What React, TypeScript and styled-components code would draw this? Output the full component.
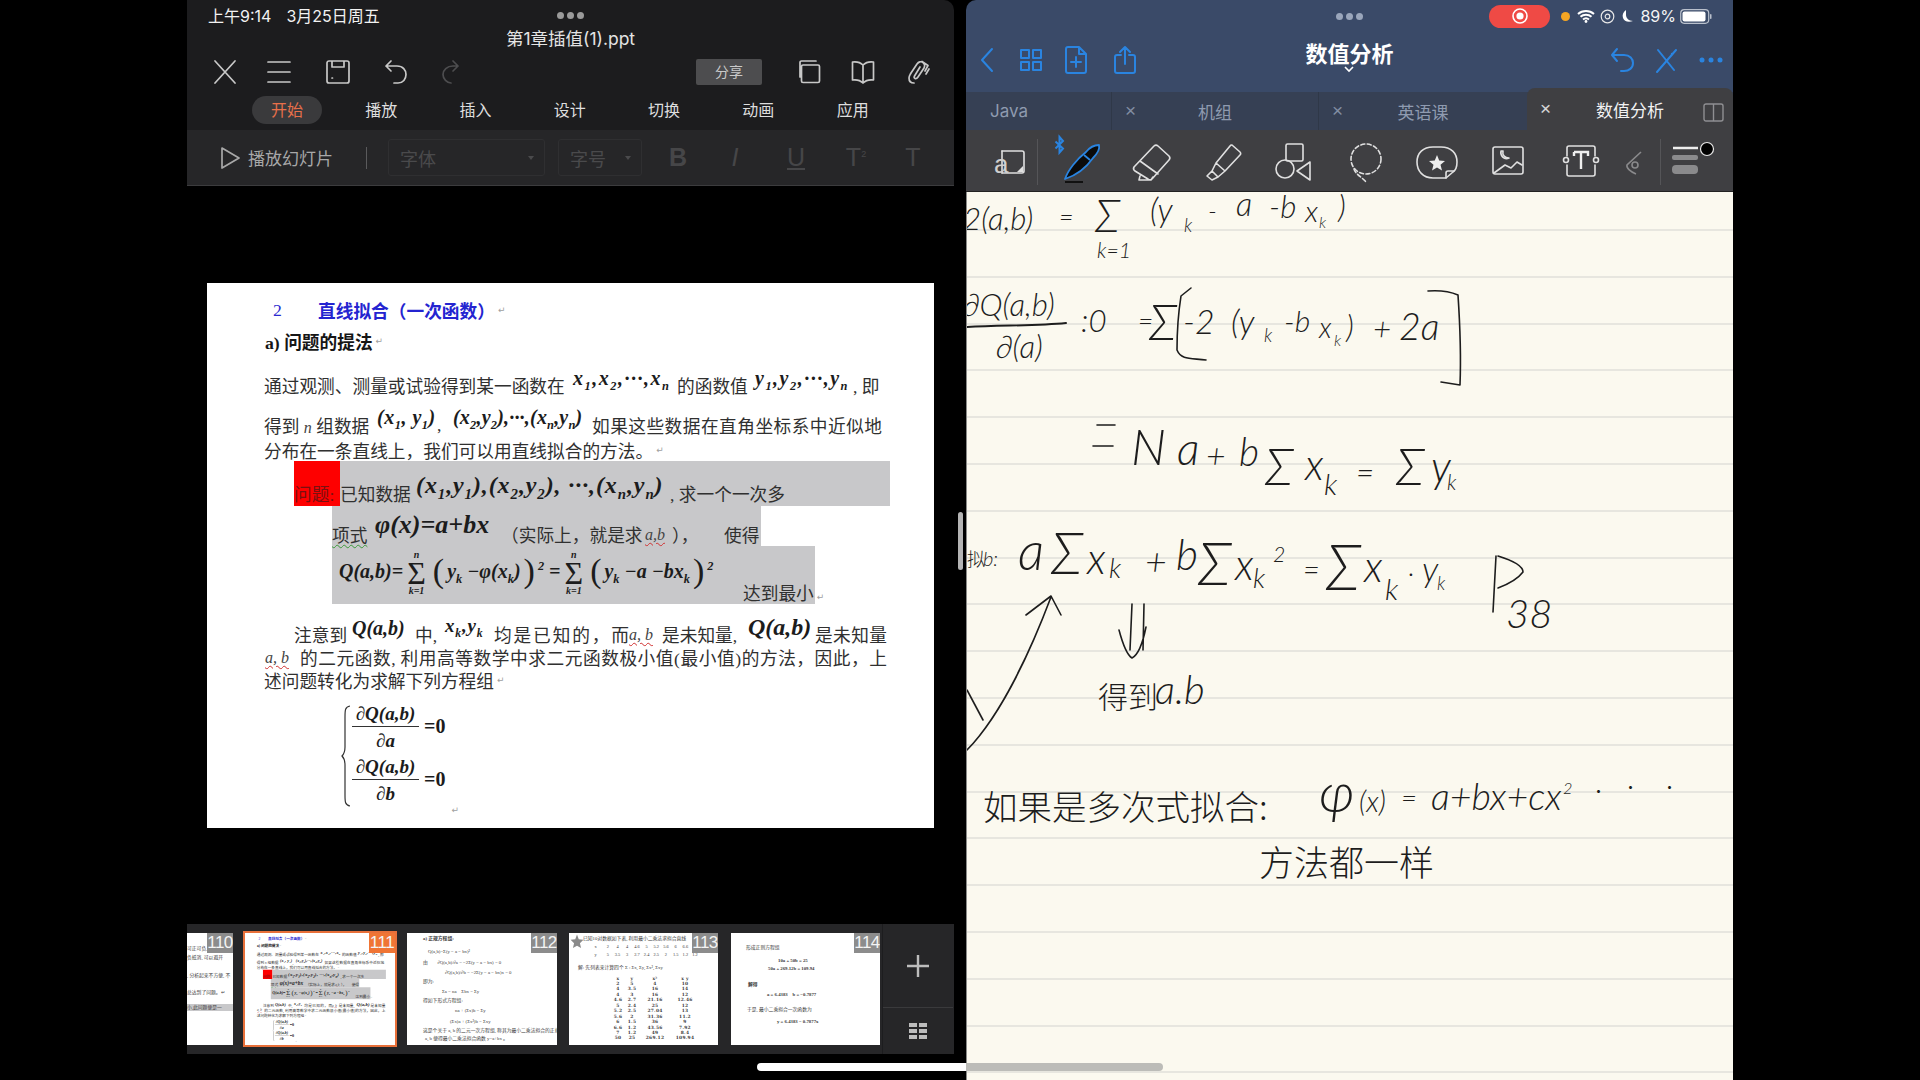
import React from "react";
import styled, { createGlobalStyle } from "styled-components";

const SANS = `"Inter", "Noto Sans CJK SC", sans-serif`;
const CJK = `"Noto Sans CJK SC", "Liberation Sans", sans-serif`;
const SERIF = `"Liberation Serif", "Noto Sans CJK SC", serif`;

const Global = createGlobalStyle`
  html, body { margin: 0; padding: 0; background: #000; overflow: hidden; }
  #root { width: 1920px; height: 1080px; }
`;

const Screen = styled.div`
  position: relative;
  width: 1920px;
  height: 1080px;
  background: #000;
  display: flex;
  padding-left: 187px;
  gap: 12px;
  box-sizing: border-box;
  overflow: hidden;
  font-family: ${SANS};
`;

/* ---------- left pane ---------- */
const LeftPane = styled.section`
  width: 767px;
  height: 1080px;
  display: flex;
  flex-direction: column;
  flex: none;
`;
const TopBar = styled.header`
  background: #1c1c1e;
  height: 130px;
  border-top-right-radius: 10px;
  flex: none;
`;
const StatusRow = styled.div`
  height: 32px;
  box-sizing: border-box;
  padding: 0 21px 2px;
  display: grid;
  grid-template-columns: 1fr auto 1fr;
  align-items: center;
  color: #f2f2f2;
  font-size: 16px;
  white-space: nowrap;
`;
const StatusDate = styled.span`
  margin-left: 15px;
`;
const Dots = styled.div<{ $c: string }>`
  display: flex;
  gap: 3px;
  & > i {
    display: block;
    width: 7px;
    height: 7px;
    border-radius: 50%;
    background: ${(p) => p.$c};
  }
`;
const TitleRow = styled.div`
  height: 16px;
  line-height: 16px;
  text-align: center;
  color: #e4e4e4;
  font-size: 17.500px;
  margin-top: -1px;
  margin-bottom: 1px;
`;
const IconRow = styled.div`
  height: 48px;
  display: flex;
  align-items: center;
  padding: 0 8px 0 11px;
`;
const Slot = styled.div<{ $w: number }>`
  width: ${(p) => p.$w}px;
  display: flex;
  justify-content: center;
  align-items: center;
  flex: none;
`;
const Spacer = styled.div`
  flex: 1;
`;
const ShareBtn = styled.div`
  width: 66px;
  height: 26px;
  line-height: 26px;
  border-radius: 2px;
  background: #4d4d4f;
  color: #c9c9c9;
  text-align: center;
  font-size: 14px;
  margin-right: 20px;
`;
const MenuRow = styled.nav`
  height: 28px;
  display: flex;
  align-items: center;
  padding-left: 65px;
`;
const MenuItem = styled.div<{ $on?: boolean }>`
  width: ${(p) => (p.$on ? 70 : 94.300)}px;
  margin-right: ${(p) => (p.$on ? 12 : 0)}px;
  height: 28px;
  line-height: 28px;
  text-align: center;
  border-radius: 14px;
  font-size: 16px;
  background: ${(p) => (p.$on ? "#3a3a3c" : "transparent")};
  color: ${(p) => (p.$on ? "#e8704a" : "#dedede")};
`;
const FormatBar = styled.div`
  height: 56px;
  box-sizing: border-box;
  background: #262628;
  border-bottom: 1px solid #3c3c3e;
  display: flex;
  align-items: center;
  padding-left: 32px;
  flex: none;
`;
const PlayLabel = styled.span`
  font-size: 17px;
  color: #a8a8a8;
  margin-left: 7px;
  width: 118px;
  white-space: nowrap;
`;
const VRule = styled.div`
  width: 1px;
  height: 22px;
  background: #5a5a5c;
  margin-right: 21px;
`;
const Select = styled.div<{ $w: number }>`
  width: ${(p) => p.$w}px;
  height: 37px;
  box-sizing: border-box;
  border: 1px solid #2f2f31;
  border-radius: 3px;
  margin-right: 13px;
  display: flex;
  align-items: center;
  justify-content: space-between;
  padding: 0 10px 0 11px;
  color: #4a4a4c;
  font-size: 18px;
  &::after {
    content: "";
    border-left: 3px solid transparent;
    border-right: 3px solid transparent;
    border-top: 4px solid #4a4a4c;
  }
`;
const Fmt = styled.span<{ $w: number; $i?: boolean; $u?: boolean; $b?: boolean }>`
  width: ${(p) => p.$w}px;
  text-align: center;
  font-family: "Liberation Sans", sans-serif;
  font-size: 25px;
  font-weight: ${(p) => (p.$b ? 700 : 400)};
  font-style: ${(p) => (p.$i ? "italic" : "normal")};
  text-decoration: ${(p) => (p.$u ? "underline" : "none")};
  color: #464648;
  & > sup {
    font-size: 9px;
  }
`;
const Stage = styled.div`
  height: 738px;
  padding: 97px 0 0 20px;
  box-sizing: border-box;
  flex: none;
`;
const Slide = styled.div`
  width: 727px;
  height: 545px;
  background: #fff;
  overflow: hidden;
`;

/* ---------- slide document ---------- */
const DocBody = styled.div`
  width: 727px;
  height: 545px;
  padding-top: 13px;
  box-sizing: border-box;
  background: #fff;
  color: #303030;
  font-family: ${SERIF};
  font-size: 17.700px;
`;
const Row = styled.div<{ $h: number; $pl?: number; $ml?: number; $mt?: number }>`
  display: flex;
  align-items: center;
  height: ${(p) => p.$h}px;
  padding-left: ${(p) => p.$pl ?? 0}px;
  margin-left: ${(p) => p.$ml ?? 0}px;
  margin-top: ${(p) => p.$mt ?? 0}px;
  white-space: nowrap;
  box-sizing: border-box;
`;
const Heading = styled.span<{ $w?: number; $c: string; $b?: boolean }>`
  flex: none;
  width: ${(p) => (p.$w ? `${p.$w}px` : "auto")};
  color: ${(p) => p.$c};
  font-weight: ${(p) => (p.$b ? 700 : 400)};
  font-family: ${SERIF};
`;
const Seg = styled.span<{ $w: number; $fit?: boolean; $down?: number; $ml?: number }>`
  flex: none;
  width: ${(p) => p.$w}px;
  margin-top: ${(p) => p.$down ?? 0}px;
  margin-left: ${(p) => p.$ml ?? 0}px;
  ${(p) => (p.$fit ? "white-space: normal; text-align: justify; text-align-last: justify;" : "")}
`;
const F = styled.span<{ $w: number; $s: number; $up?: number; $pl?: number; $ls?: number }>`
  flex: none;
  display: block;
  width: ${(p) => p.$w}px;
  margin-left: ${(p) => p.$pl ?? 0}px;
  margin-bottom: ${(p) => p.$up ?? 0}px;
  font-family: "Liberation Serif", serif;
  font-weight: 700;
  font-style: italic;
  font-size: ${(p) => p.$s}px;
  letter-spacing: ${(p) => p.$ls ?? 0}px;
  color: #1c1c1c;
  white-space: nowrap;
  & sub,
  & sup {
    font-size: 62%;
    line-height: 0;
  }
`;
const Gray = styled.div<{ $w: number; $h: number; $pt?: number; $ml?: number; $c?: string }>`
  display: flex;
  align-items: center;
  flex: none;
  box-sizing: border-box;
  width: ${(p) => p.$w}px;
  height: ${(p) => p.$h}px;
  padding-top: ${(p) => p.$pt ?? 0}px;
  margin-left: ${(p) => p.$ml ?? 0}px;
  background: ${(p) => p.$c ?? "#c8c8ca"};
  white-space: nowrap;
`;
const DarkRed = styled.span`
  color: #7a1010;
`;
const Wavy = styled.span<{ $c: string; $w?: number }>`
  flex: none;
  width: ${(p) => (p.$w ? `${p.$w}px` : "auto")};
  text-decoration: underline wavy ${(p) => p.$c} 1px;
  text-underline-offset: 2px;
`;
const AB = styled.i`
  font-family: "Liberation Serif", serif;
  font-size: 16px;
  color: #444;
`;
const Ret = styled.span`
  font-family: "DejaVu Sans", sans-serif;
  font-size: 9px;
  font-weight: 400;
  color: #a0a0a0;
  margin-left: 3px;
`;
const Sum = styled.span`
  display: inline-flex;
  flex-direction: column;
  align-items: center;
  vertical-align: middle;
  line-height: 1;
  margin: 0 4px;
  font-style: normal;
  font-size: 32px;
  & > small {
    font-size: 10px;
    line-height: 10px;
    font-style: italic;
  }
  & > b {
    font-weight: 400;
    line-height: 26px;
  }
`;
const Paren = styled.span`
  font-weight: 400;
  font-style: normal;
  font-size: 34px;
  line-height: 0;
  vertical-align: -4px;
  margin: 0 3px;
`;
const SysWrap = styled.div`
  display: flex;
  align-items: flex-end;
  margin: 9.500px 0 0 134px;
`;
const FracCol = styled.div`
  display: flex;
  flex-direction: column;
  margin-left: 1px;
`;
const FracRow = styled.div`
  display: flex;
  align-items: center;
  height: 53px;
`;
const Frac = styled.div`
  width: 67px;
  display: flex;
  flex-direction: column;
  font-family: "Liberation Serif", serif;
  font-weight: 700;
  font-size: 19px;
  color: #1c1c1c;
  text-align: center;
  font-style: italic;
  white-space: nowrap;
`;
const Num = styled.div`
  height: 26px;
  line-height: 26px;
  box-sizing: border-box;
  border-bottom: 1.500px solid #333;
`;
const Den = styled.div`
  height: 27px;
  line-height: 27px;
`;
const Eq = styled.span`
  font-family: "Liberation Serif", serif;
  font-size: 20px;
  font-weight: 700;
  margin: 0 0 3px 5px;
  color: #1c1c1c;
`;
const EndRet = styled(Ret)`
  margin: 0 0 -8px 6px;
`;

const Doc = () => (
  <DocBody>
    <Row $h={28} $pl={66}>
      <Heading $w={45} $c="#2a2ad0">2</Heading>
      <Heading $c="#2424d0" $b>直线拟合（一次函数）</Heading>
      <Ret>↵</Ret>
    </Row>
    <Row $h={34} $pl={58}>
      <Heading $c="#161616" $b>a) 问题的提法</Heading>
      <Ret>↵</Ret>
    </Row>
    <Row $h={54} $pl={57}>
      <Seg $w={309}>通过观测、测量或试验得到某一函数在</Seg>
      <F $w={104} $s={20} $up={14} $ls={1.500}>x<sub>1</sub>,x<sub>2</sub>,···,x<sub>n</sub></F>
      <Seg $w={78}>的函数值</Seg>
      <F $w={98} $s={20} $up={14} $ls={1.500}>y<sub>1</sub>,y<sub>2</sub>,···,y<sub>n</sub></F>
      <Seg $w={36}>, 即</Seg>
    </Row>
    <Row $h={26} $pl={57}>
      <Seg $w={113}>得到 <AB>n</AB> 组数据</Seg>
      <F $w={60} $s={20} $up={16} $ls={0.500}>(x<sub>1</sub>, y<sub>1</sub>)</F>
      <Seg $w={16}>,</Seg>
      <F $w={139} $s={20} $up={16} $ls={0.200}>(x<sub>2</sub>,y<sub>2</sub>),···,(x<sub>n</sub>,y<sub>n</sub>)</F>
      <Seg $w={290} $fit>如果这些数据在直角坐标系中近似地</Seg>
    </Row>
    <Row $h={23} $pl={57}>
      <span>分布在一条直线上，我们可以用直线拟合的方法。</span>
      <Ret>↵</Ret>
    </Row>
    <Row $h={45} $ml={87}>
      <Gray $w={46} $h={45} $pt={18} $c="#fe0000"><DarkRed>问题:</DarkRed></Gray>
      <Gray $w={550} $h={45} $pt={18}>
        <Seg $w={76}>已知数据</Seg>
        <F $w={254} $s={24} $up={14} $ls={0.900}>(x<sub>1</sub>,y<sub>1</sub>),(x<sub>2</sub>,y<sub>2</sub>), ···,(x<sub>n</sub>,y<sub>n</sub>)</F>
        <span>, 求一个一次多</span>
      </Gray>
    </Row>
    <Gray $w={429} $h={40} $pt={16} $ml={125}>
      <Wavy $c="#3a9a3a" $w={43}>项式</Wavy>
      <F $w={126} $s={26} $up={18}>φ(x)=a+bx</F>
      <Seg $w={144}>（实际上，就是求</Seg>
      <Wavy $c="#d03030" $w={27}><AB>a,b</AB></Wavy>
      <Seg $w={52}>），</Seg>
      <span>使得</span>
    </Gray>
    <Gray $w={483} $h={58} $ml={125}>
      <F $w={380} $s={20} $up={4} $pl={7}>
        Q(a,b)=<Sum><small>n</small><b>Σ</b><small>k=1</small></Sum>
        <Paren>(</Paren>y<sub>k</sub>&nbsp;−φ(x<sub>k</sub>)<Paren>)</Paren><sup>2</sup>&nbsp;=
        <Sum><small>n</small><b>Σ</b><small>k=1</small></Sum>
        <Paren>(</Paren>y<sub>k</sub>&nbsp;−a −bx<sub>k</sub><Paren>)</Paren><sup>2</sup>
      </F>
      <Seg $w={71} $down={34} $ml={24}>达到最小<Ret>↵</Ret></Seg>
    </Gray>
    <Row $h={23} $pl={87} $mt={18.500}>
      <Seg $w={58}>注意到</Seg>
      <F $w={63} $s={20} $up={12}>Q(a,b)</F>
      <Seg $w={30}>中,</Seg>
      <F $w={49} $s={19} $ls={0.800} $up={16}>x<sub>k</sub>,y<sub>k</sub></F>
      <Seg $w={135} $fit>均是已知的，而</Seg>
      <Wavy $c="#d03030" $w={33}><AB>a, b</AB></Wavy>
      <Seg $w={86}>是未知量,</Seg>
      <F $w={67} $s={24} $up={14}>Q(a,b)</F>
      <Seg $w={72} $fit>是未知量</Seg>
    </Row>
    <Row $h={23} $pl={58}>
      <Wavy $c="#d03030" $w={35}><AB>a, b</AB></Wavy>
      <Seg $w={587} $fit>的二元函数, 利用高等数学中求二元函数极小值(最小值)的方法，因此，上</Seg>
    </Row>
    <Row $h={23} $pl={57}>
      <span>述问题转化为求解下列方程组</span>
      <Ret>↵</Ret>
    </Row>
    <SysWrap>
      <svg width="10" height="102" viewBox="0 0 10 102">
        <path d="M9 1C4 2 4 5 4 12V42C4 47 3 49 1 51C3 53 4 55 4 60V90C4 97 4 100 9 101" fill="none" stroke="#333" strokeWidth="1.200" />
      </svg>
      <FracCol>
        <FracRow>
          <Frac><Num>∂Q(a,b)</Num><Den>∂a</Den></Frac>
          <Eq>=0</Eq>
        </FracRow>
        <FracRow>
          <Frac><Num>∂Q(a,b)</Num><Den>∂b</Den></Frac>
          <Eq>=0</Eq>
        </FracRow>
      </FracCol>
      <EndRet>↵</EndRet>
    </SysWrap>
  </DocBody>
);

/* ---------- thumbnails ---------- */
const Strip = styled.div`
  height: 130px;
  background: #262628;
  display: flex;
  align-items: center;
  flex: none;
`;
const Thumb = styled.div<{ $w: number; $ml?: number; $on?: boolean }>`
  position: relative;
  flex: none;
  width: ${(p) => p.$w}px;
  height: ${(p) => (p.$on ? 116 : 112)}px;
  margin-left: ${(p) => p.$ml ?? 0}px;
  background: #fff;
  overflow: hidden;
  box-sizing: border-box;
  border: ${(p) => (p.$on ? "2px solid #e8703a" : "none")};
`;
const Badge = styled.div<{ $on?: boolean }>`
  position: absolute;
  top: 0;
  right: 0;
  width: 26px;
  height: 20px;
  line-height: 20px;
  text-align: center;
  background: ${(p) => (p.$on ? "#f07535" : "#8c8c8c")};
  color: #f4f4f4;
  font-size: 17px;
  letter-spacing: -0.500px;
  font-family: "Liberation Sans", sans-serif;
  z-index: 1;
`;
const Scaled = styled.div`
  width: 727px;
  height: 545px;
  transform: scale(0.2063);
  transform-origin: 0 0;
`;
const MiniLine = styled.div<{ $l: number; $t: number; $s?: number; $b?: boolean }>`
  height: 7px;
  line-height: 7px;
  margin-top: ${(p) => p.$t}px;
  padding-left: ${(p) => p.$l}px;
  font-family: ${SERIF};
  font-size: ${(p) => p.$s ?? 4.800}px;
  font-weight: ${(p) => (p.$b ? 700 : 400)};
  color: #3a3a3a;
  white-space: pre;
`;
const MiniRight = styled.div<{ $t: number; $c?: string }>`
  height: 7px;
  line-height: 7px;
  margin-top: ${(p) => p.$t}px;
  font-family: ${SERIF};
  font-size: 4.800px;
  color: #3a3a3a;
  white-space: pre;
  background: ${(p) => p.$c ?? "transparent"};
`;
const MiniTable = styled.div`
  display: grid;
  grid-template-columns: 14px 14px 32px 28px;
  margin: 5px 0 0 42px;
  font-family: "DejaVu Serif", serif;
  font-size: 4.400px;
  font-weight: 700;
  line-height: 5.450px;
  letter-spacing: 0.300px;
  text-align: center;
  color: #3a3a3a;
`;
const MiniValues = styled.div`
  display: grid;
  grid-template-columns: 15px repeat(10, 9.700px);
  margin: 1.500px 0 0 19px;
  font-family: ${SERIF};
  font-size: 4.400px;
  line-height: 8px;
  color: #3a3a3a;
  text-align: center;
  white-space: nowrap;
`;
const Star = styled.div`
  position: absolute;
  left: 1px;
  top: 1px;
  line-height: 0;
`;
const Actions = styled.div`
  flex: none;
  width: 71px;
  height: 130px;
  margin-left: 2px;
  display: flex;
  flex-direction: column;
  border-left: 1px solid #1d1d1f;
  box-sizing: border-box;
`;
const ActionCell = styled.div<{ $h: number; $line?: boolean }>`
  height: ${(p) => p.$h}px;
  display: flex;
  align-items: center;
  justify-content: center;
  box-sizing: border-box;
  border-bottom: ${(p) => (p.$line ? "1px solid #3a3a3c" : "none")};
`;

const TABLE = [
  ["x", "y", "x²", "x y"],
  ["2", "5", "4", "10"],
  ["4", "3.5", "16", "14"],
  ["4", "3", "16", "12"],
  ["4.6", "2.7", "21.16", "12.46"],
  ["5", "2.4", "25", "12"],
  ["5.2", "2.5", "27.04", "13"],
  ["5.6", "2", "31.36", "11.2"],
  ["6", "1.5", "36", "9"],
  ["6.6", "1.2", "43.56", "7.92"],
  ["7", "1.2", "49", "8.4"],
  ["50", "25", "269.12", "109.94"],
];
const XS = ["x", "2", "4", "4", "4.6", "5", "5.2", "5.6", "6", "6.6", "7"];
const YS = ["y", "5", "3.5", "3", "2.7", "2.4", "2.5", "2", "1.5", "1.2", "1.2"];

const Thumbs = () => (
  <Strip>
    <Thumb $w={46}>
      <MiniRight $t={12}>可正可负, 水表量大</MiniRight>
      <MiniRight $t={2}>负抵消, 可以避开</MiniRight>
      <MiniRight $t={11}>, 分析起来不方便, 不</MiniRight>
      <MiniRight $t={10}>总达到了问题。↵</MiniRight>
      <MiniRight $t={8} $c="#c8c8ca">小,此问题便是一</MiniRight>
      <Badge>110</Badge>
    </Thumb>
    <Thumb $w={154} $on $ml={10}>
      <Scaled><Doc /></Scaled>
      <Badge $on>111</Badge>
    </Thumb>
    <Thumb $w={150} $ml={10}>
      <MiniLine $l={16} $t={1.500} $b>a) 正规方程组:</MiniLine>
      <MiniLine $l={21} $t={6}>Q(a,b)=Σ(y − a − bx)²</MiniLine>
      <MiniLine $l={16} $t={4}>由        ∂Q(a,b)/∂a = −2Σ(y − a − bx) = 0</MiniLine>
      <MiniLine $l={38} $t={3}>∂Q(a,b)/∂b = −2Σ(y − a − bx)x = 0</MiniLine>
      <MiniLine $l={16} $t={2}>即为:</MiniLine>
      <MiniLine $l={35} $t={3}>Σa = na    Σbx = Σy</MiniLine>
      <MiniLine $l={16} $t={2}>得如下形式方程组:</MiniLine>
      <MiniLine $l={48} $t={3}>na + (Σx)b = Σy</MiniLine>
      <MiniLine $l={43} $t={4}>(Σx)a + (Σx²)b = Σxy</MiniLine>
      <MiniLine $l={16} $t={2}>这是个关于 a, b 的二元一次方程组, 称其为最小二乘法拟合的正规方程组, 解得</MiniLine>
      <MiniLine $l={18} $t={1}>a, b 便得最小二乘法拟合函数 y=a+bx 。</MiniLine>
      <Badge>112</Badge>
    </Thumb>
    <Thumb $w={149} $ml={12}>
      <Star>
        <svg width="14" height="14" viewBox="0 0 24 24"><path d="M12 1l3 8 8 1-6 6 2 8-7-4-7 4 2-8-6-6 8-1z" fill="#8a8a8a" /></svg>
      </Star>
      <MiniLine $l={14} $t={1.500}>已知10对数据如下表, 利用最小二乘法求拟合直线</MiniLine>
      <MiniValues>{XS.map((v, i) => <span key={i}>{v}</span>)}{YS.map((v, i) => <span key={i}>{v}</span>)}</MiniValues>
      <MiniLine $l={9} $t={4.500}>解: 先列表来计算四个 Σ : Σx, Σy, Σx², Σxy</MiniLine>
      <MiniTable>
        {TABLE.flat().map((v, i) => <span key={i}>{v}</span>)}
      </MiniTable>
      <Badge>113</Badge>
    </Thumb>
    <Thumb $w={149} $ml={13}>
      <MiniLine $l={15} $t={10.500}>形成正则方程组</MiniLine>
      <MiniLine $l={47} $t={6} $b>10a + 50b = 25</MiniLine>
      <MiniLine $l={37} $t={1} $b>50a + 269.12b = 109.94</MiniLine>
      <MiniLine $l={17} $t={9} $b>解得</MiniLine>
      <MiniLine $l={36} $t={3} $b>a = 6.4383    b = −0.7877</MiniLine>
      <MiniLine $l={16} $t={8}>于是, 最小二乘拟合一次函数为</MiniLine>
      <MiniLine $l={46} $t={5} $b>y = 6.4383 − 0.7877x</MiniLine>
      <Badge>114</Badge>
    </Thumb>
    <Actions>
      <ActionCell $h={84} $line>
        <svg width="26" height="26" viewBox="0 0 26 26"><path d="M13 2V24M2 13H24" stroke="#bdbdbd" strokeWidth="2.400" /></svg>
      </ActionCell>
      <ActionCell $h={46}>
        <svg width="20" height="18" viewBox="0 0 20 18" fill="#bdbdbd">
          <rect x="1" y="1" width="8" height="4" /><rect x="11" y="1" width="8" height="4" />
          <rect x="1" y="7" width="8" height="4" /><rect x="11" y="7" width="8" height="4" />
          <rect x="1" y="13" width="8" height="4" /><rect x="11" y="13" width="8" height="4" />
        </svg>
      </ActionCell>
    </Actions>
  </Strip>
);

/* ---------- right pane ---------- */
const RightPane = styled.section`
  width: 767px;
  height: 1080px;
  display: flex;
  flex-direction: column;
  flex: none;
  border-top-left-radius: 10px;
  overflow: hidden;
`;
const BlueHead = styled.header`
  height: 92px;
  background: #3a4a68;
  display: flex;
  flex-direction: column;
  flex: none;
`;
const RStatus = styled.div`
  height: 32px;
  display: grid;
  grid-template-columns: 1fr auto 1fr;
  align-items: center;
  flex: none;
`;
const RStatusRight = styled.div`
  display: flex;
  align-items: center;
  justify-content: flex-end;
  color: #f4f4f4;
  font-size: 16px;
  padding-right: 21px;
`;
const RecPill = styled.div`
  width: 61px;
  height: 23px;
  border-radius: 12px;
  background: #ef4a45;
  display: flex;
  align-items: center;
  justify-content: center;
  margin-right: 11px;
`;
const OrangeDot = styled.i`
  display: block;
  width: 9px;
  height: 9px;
  border-radius: 50%;
  background: #f5a623;
  margin-right: 7px;
`;
const StatusIcon = styled.div`
  display: flex;
  margin-right: 5px;
`;
const PctText = styled.span`
  margin-right: 4px;
`;
const NavRow = styled.div`
  flex: 1;
  display: grid;
  grid-template-columns: 1fr auto 1fr;
`;
const NavGroup = styled.div`
  display: flex;
  align-items: center;
  height: 56px;
`;
const NavGroupEnd = styled(NavGroup)`
  justify-content: flex-end;
`;
const DocTitle = styled.div`
  display: flex;
  flex-direction: column;
  align-items: center;
  color: #fff;
  font-family: ${CJK};
  font-weight: 700;
  font-size: 22px;
  line-height: 28px;
  padding-top: 6px;
`;
const TabBar = styled.div`
  height: 38px;
  background: #364054;
  display: flex;
  flex: none;
  position: relative;
`;
const Tab = styled.div<{ $w: number; $on?: boolean; $first?: boolean }>`
  width: ${(p) => p.$w}px;
  flex: none;
  display: grid;
  grid-template-columns: 1fr auto 1fr;
  align-items: center;
  box-sizing: border-box;
  padding-left: ${(p) => (p.$first ? 24 : 13)}px;
  padding-right: ${(p) => (p.$first ? 0 : 13)}px;
  border-left: ${(p) => (p.$first || p.$on ? "none" : "1px solid #2f3848")};
  color: ${(p) => (p.$on ? "#f2f2f2" : "#8f9bb0")};
  font-size: 17px;
  background: ${(p) => (p.$on ? "#3f3f42" : "transparent")};
  ${(p) =>
    p.$on
      ? "margin-top: -4px; height: 42px; border-top-left-radius: 8px; border-top-right-radius: 8px;"
      : ""}
`;
const TabClose = styled.span`
  font-size: 19px;
  font-family: "Liberation Sans", sans-serif;
  opacity: 0.85;
  justify-self: start;
`;
const SplitIcon = styled.div`
  position: absolute;
  right: 9px;
  top: 11px;
  line-height: 0;
`;
const ToolBar = styled.div`
  height: 62px;
  background: #3f3f42;
  border-bottom: 1px solid #222;
  box-sizing: border-box;
  display: flex;
  align-items: center;
  padding: 2px 0 0 24px;
  flex: none;
`;
const ToolRule = styled.div<{ $ml: number; $mr: number }>`
  width: 1px;
  height: 46px;
  background: #555558;
  margin: 0 ${(p) => p.$mr}px 0 ${(p) => p.$ml}px;
`;
const Tool = styled.div<{ $w?: number }>`
  width: ${(p) => p.$w ?? 71.300}px;
  flex: none;
  display: flex;
  justify-content: center;
`;
const Paper = styled.div`
  flex: 1;
  background-color: #fbf9ef;
  background-image: repeating-linear-gradient(
    to bottom,
    transparent 0,
    transparent 37px,
    #e7e6df 37px,
    #e7e6df 39px,
    transparent 39px,
    transparent 46.800px
  );
  overflow: hidden;
  line-height: 0;
  border-left: 1px solid #8a8a88;
`;
const Notes = styled.svg`
  display: block;
  width: 767px;
  height: 888px;
`;
const Ink = styled.text<{ $cjk?: boolean }>`
  font-family: ${(p) => (p.$cjk ? CJK : `"Lato", "Inter", sans-serif`)};
  font-weight: 300;
  fill: #1d1d1d;
  font-style: ${(p) => (p.$cjk ? "normal" : "italic")};
`;
const Handle = styled.div`
  position: absolute;
  left: 958px;
  top: 512px;
  width: 5px;
  height: 58px;
  border-radius: 3px;
  background: #b4b4b4;
`;
const HomeBar = styled.div`
  position: absolute;
  left: 757px;
  top: 1063px;
  width: 406px;
  height: 8px;
  border-radius: 4px;
  background: linear-gradient(to right, #fff 0, #fff 209px, #bcbcb8 209px, #bcbcb8 100%);
`;

const stroke = { fill: "none", stroke: "#c8c8c8", strokeWidth: 1.700, strokeLinecap: "round", strokeLinejoin: "round" } as const;
const blue = { fill: "none", stroke: "#2a84e0", strokeWidth: 2, strokeLinecap: "round", strokeLinejoin: "round" } as const;
const white = { fill: "none", stroke: "#e0e0e0", strokeWidth: 1.600, strokeLinecap: "round", strokeLinejoin: "round" } as const;

const IcoSvg = styled.svg`
  overflow: visible;
  display: block;
`;
const Ico = ({ s = 28, children, w }: { s?: number; w?: number; children: React.ReactNode }) => (
  <IcoSvg width={w ?? s} height={s} viewBox={`0 0 ${w ?? s} ${s}`}>{children}</IcoSvg>
);

type T = [string, number, number, number, boolean?];
const INK: T[] = [
  ["2(a,b)", 962, 230, 25],
  ["=", 1058, 226, 20],
  ["Σ", 1094, 232, 36],
  ["k=1", 1096, 258, 17],
  ["(y", 1149, 222, 26],
  ["k", 1183, 232, 15],
  ["-", 1207, 220, 20],
  ["a", 1235, 216, 26],
  ["-b", 1268, 218, 25],
  ["x", 1304, 222, 24],
  ["k", 1318, 228, 13],
  [")", 1337, 218, 25],
  ["∂Q(a,b)", 962, 316, 25],
  ["∂(a)", 995, 358, 25],
  [":0", 1080, 332, 25],
  ["=", 1137, 330, 21],
  ["Σ", 1148, 340, 40],
  ["-2", 1182, 334, 27],
  ["(y", 1230, 334, 27],
  ["k", 1263, 342, 15],
  ["-b", 1283, 332, 24],
  ["x", 1318, 338, 23],
  ["k", 1333, 346, 13],
  [")", 1345, 338, 25],
  ["+", 1372, 340, 25],
  ["2a", 1398, 340, 30],
  ["N", 1130, 465, 40],
  ["a", 1176, 465, 36],
  ["+", 1205, 468, 27],
  ["b", 1238, 466, 31],
  ["Σ", 1264, 485, 41],
  ["x", 1304, 480, 34],
  ["k", 1323, 495, 24],
  ["=", 1355, 484, 25],
  ["Σ", 1395, 485, 41],
  ["y", 1430, 482, 34],
  ["k", 1446, 490, 17],
  ["拟", 966, 566, 18, true],
  ["b:", 982, 566, 16],
  ["a", 1017, 570, 42],
  ["Σ", 1050, 574, 46],
  ["x", 1086, 574, 34],
  ["k", 1108, 578, 22],
  ["+", 1144, 575, 30],
  ["b", 1175, 570, 34],
  ["Σ", 1197, 585, 48],
  ["x", 1234, 580, 34],
  ["k", 1252, 588, 22],
  ["2", 1272, 562, 17],
  ["=", 1302, 580, 23],
  ["Σ", 1325, 590, 50],
  ["x", 1363, 582, 34],
  ["k", 1384, 600, 24],
  ["·", 1407, 582, 20],
  ["y", 1421, 582, 28],
  ["k", 1436, 590, 15],
  ["38", 1505, 628, 32],
  ["得到", 1097, 708, 30, true],
  ["a.b", 1154, 704, 32],
  ["如果是多次式拟合:", 982, 820, 34.500, true],
  ["φ", 1318, 812, 44],
  ["(x)", 1358, 812, 23],
  ["=", 1400, 808, 22],
  ["a+bx+cx", 1430, 810, 30],
  ["2", 1562, 794, 13],
  ["·", 1594, 800, 24],
  ["·", 1626, 796, 24],
  ["·", 1665, 796, 24],
  ["方法都一样", 1258, 876, 35, true],
];

export default function App() {
  return (
    <Screen>
      <Global />
      <LeftPane>
        <TopBar>
          <StatusRow>
            <span>上午9:14<StatusDate>3月25日周五</StatusDate></span>
            <Dots $c="#9a9a9a"><i /><i /><i /></Dots>
            <span />
          </StatusRow>
          <TitleRow>第1章插值(1).ppt</TitleRow>
          <IconRow>
            <Slot $w={54}><Ico s={24}><path d="M2 1L22 23M22 1L2 23" {...stroke} /></Ico></Slot>
            <Slot $w={54}><Ico s={24}><path d="M1 2H23M1 12H23M1 22H23" {...stroke} /></Ico></Slot>
            <Slot $w={64}><Ico s={24}><path d="M3 1H21a2 2 0 0 1 2 2V21a2 2 0 0 1-2 2H3a2 2 0 0 1-2-2V3a2 2 0 0 1 2-2ZM6 1V7H18V1M6 18h.5" {...stroke} /></Ico></Slot>
            <Slot $w={52}><Ico s={24}><path d="M7 1L2 6L7 11M2 6H13C19 6 22 10 22 14.500C22 19 19 23 14 23H10" {...stroke} /></Ico></Slot>
            <Slot $w={56}><Ico s={24}><path d="M15 1L20 6L15 11M20 6H15C9 6 5 10 5 14.500C5 19 9 23 13 23" {...stroke} stroke="#4d4d4f" /></Ico></Slot>
            <Spacer />
            <ShareBtn>分享</ShareBtn>
            <Slot $w={54}><Ico s={24}><path d="M6 5H21a1.500 1.500 0 0 1 1.500 1.500V21a1.500 1.500 0 0 1-1.500 1.500H6A1.500 1.500 0 0 1 4.500 21V6.500A1.500 1.500 0 0 1 6 5ZM3 17V2.500A1.500 1.500 0 0 1 4.500 1H19" {...stroke} /></Ico></Slot>
            <Slot $w={54}><Ico s={24}><path d="M12 5C9 2 5 1.500 1.500 2V20C5 19.500 9 20 12 23C15 20 19 19.500 22.500 20V2C19 1.500 15 2 12 5ZM12 5V23" {...stroke} /></Ico></Slot>
            <Slot $w={56}><Ico s={24}><path d="M8 23C5 23 3 21 3 18C3 16 4 15 5 13L11 4C12.500 2 15 1 17 2.500C19 4 19 6 18 8L12 17C11 18.500 10 19 9 18.500C8 18 8 17 8.500 16L14 7M16 1.500L22 5.500M19 11L22 5.500M20 14L23 9" {...stroke} /></Ico></Slot>
          </IconRow>
          <MenuRow>
            <MenuItem $on>开始</MenuItem>
            <MenuItem>播放</MenuItem>
            <MenuItem>插入</MenuItem>
            <MenuItem>设计</MenuItem>
            <MenuItem>切换</MenuItem>
            <MenuItem>动画</MenuItem>
            <MenuItem>应用</MenuItem>
          </MenuRow>
        </TopBar>
        <FormatBar>
          <Ico s={24} w={22}><path d="M3 2L20 12L3 22Z" {...stroke} stroke="#a8a8a8" /></Ico>
          <PlayLabel>播放幻灯片</PlayLabel>
          <VRule />
          <Select $w={157}>字体</Select>
          <Select $w={84}>字号</Select>
          <Fmt $w={46} $b>B</Fmt>
          <Fmt $w={68} $i>I</Fmt>
          <Fmt $w={54} $u>U</Fmt>
          <Fmt $w={66}>T<sup>2</sup></Fmt>
          <Fmt $w={48}>T</Fmt>
        </FormatBar>
        <Stage>
          <Slide><Doc /></Slide>
        </Stage>
        <Thumbs />
      </LeftPane>

      <RightPane>
        <BlueHead>
          <RStatus>
            <span />
            <Dots $c="#9aa6bb"><i /><i /><i /></Dots>
            <RStatusRight>
              <RecPill>
                <svg width="16" height="16" viewBox="0 0 16 16"><circle cx="8" cy="8" r="7" fill="none" stroke="#fff" strokeWidth="1.600" /><circle cx="8" cy="8" r="3.600" fill="#fff" /></svg>
              </RecPill>
              <OrangeDot />
              <StatusIcon>
                <svg width="18" height="14" viewBox="0 0 18 14"><path d="M1 5C5.500 1 12.500 1 17 5M3.500 7.800C6.500 5 11.500 5 14.500 7.800M6 10.500C7.800 9 10.200 9 12 10.500" fill="none" stroke="#fff" strokeWidth="2" /><circle cx="9" cy="12.500" r="1.400" fill="#fff" /></svg>
              </StatusIcon>
              <StatusIcon>
                <svg width="15" height="15" viewBox="0 0 15 15"><circle cx="7.500" cy="7.500" r="6.300" fill="none" stroke="#e8e8e8" strokeWidth="1.200" /><circle cx="7.500" cy="7.500" r="2.300" fill="none" stroke="#e8e8e8" strokeWidth="1.200" /></svg>
              </StatusIcon>
              <StatusIcon>
                <svg width="15" height="15" viewBox="0 0 15 15"><path d="M6 1C3 3 2 6 3 9C4 12 8 14 13 12C9 12 6 9 6 6C6 4 6 2 6 1Z" fill="#fff" /></svg>
              </StatusIcon>
              <PctText>89%</PctText>
              <svg width="32" height="15" viewBox="0 0 32 15"><rect x="0.700" y="0.700" width="28" height="13.600" rx="3.500" fill="none" stroke="#b9c0cc" strokeWidth="1.200" /><rect x="2.500" y="2.500" width="23" height="10" rx="2" fill="#fff" /><rect x="30" y="5" width="1.500" height="5" rx="0.700" fill="#b9c0cc" /></svg>
            </RStatusRight>
          </RStatus>
          <NavRow>
            <NavGroup>
              <Slot $w={42}><Ico s={24} w={14}><path d="M12 1L2 12L12 23" {...blue} /></Ico></Slot>
              <Slot $w={45}><Ico s={24}><path d="M2 2H10V10H2ZM14 2H22V10H14ZM2 14H10V22H2ZM14 14H22V22H14Z" {...blue} /></Ico></Slot>
              <Slot $w={46}><Ico s={28} w={24}><path d="M2 3a2 2 0 0 1 2-2H15L22 8V25a2 2 0 0 1-2 2H4a2 2 0 0 1-2-2ZM15 1V8H22M12 11V21M7 16H17" {...blue} /></Ico></Slot>
              <Slot $w={52}><Ico s={28} w={24}><path d="M8 9H4a2 2 0 0 0-2 2V25a2 2 0 0 0 2 2H20a2 2 0 0 0 2-2V11a2 2 0 0 0-2-2H16M12 18V1M7 6L12 1L17 6" {...blue} /></Ico></Slot>
            </NavGroup>
            <DocTitle>
              数值分析
              <svg width="10" height="7" viewBox="0 0 10 7"><path d="M1 1L5 5L9 1" fill="none" stroke="#fff" strokeWidth="1.600" /></svg>
            </DocTitle>
            <NavGroupEnd>
              <Slot $w={44}><Ico s={26}><path d="M7 2L2 8L7 14M2 8H14C20 8 23 12 23 16C23 21 19 24 14 24H11" {...blue} /></Ico></Slot>
              <Slot $w={44}><Ico s={26}><path d="M4 3L20 23M22 3L3 25" {...blue} /><circle cx="18" cy="7" r="1.200" fill="#2a84e0" /></Ico></Slot>
              <Slot $w={44}><Ico s={8} w={24}><circle cx="3" cy="4" r="2.500" fill="#2a84e0" /><circle cx="12" cy="4" r="2.500" fill="#2a84e0" /><circle cx="21" cy="4" r="2.500" fill="#2a84e0" /></Ico></Slot>
            </NavGroupEnd>
          </NavRow>
        </BlueHead>
        <TabBar>
          <Tab $w={145} $first>Java</Tab>
          <Tab $w={207}><TabClose>×</TabClose><span>机组</span></Tab>
          <Tab $w={209}><TabClose>×</TabClose><span>英语课</span></Tab>
          <Tab $w={206} $on><TabClose>×</TabClose><span>数值分析</span></Tab>
          <SplitIcon>
            <svg width="21" height="19" viewBox="0 0 21 19"><rect x="1" y="1" width="19" height="17" rx="2" fill="none" stroke="#8f8f92" strokeWidth="1.400" /><path d="M10.500 1V18" stroke="#8f8f92" strokeWidth="1.400" /></svg>
          </SplitIcon>
        </TabBar>
        <ToolBar>
          <Tool $w={40}>
            <Ico s={32}>
              <path d="M8 5H28a2 2 0 0 1 2 2V25a2 2 0 0 1-2 2H8" {...white} />
              <path d="M8 5V27" {...white} />
              <path d="M23 26L29 20V26Z" fill="#e0e0e0" />
              <text x="0" y="27" fontSize="26" fontFamily="Liberation Sans" fill="#cfcfcf" fontWeight="400">a</text>
            </Ico>
          </Tool>
          <ToolRule $ml={7} $mr={7} />
          <Tool>
            <Ico s={48}>
              <path d="M-1.500 3.500L6 10.500L2.500 14.500V-1L6 3L-1.500 10.500" fill="none" stroke="#2a84e0" strokeWidth="2" />
              <path d="M8 41C11 32 20 21 29 14C33 9 38 7 42 7C43 11 40 16 36 20C29 30 20 37 8 41Z" fill="#0b0b0b" stroke="#2a84e0" strokeWidth="1.800" strokeLinejoin="round" />
              <path d="M27 17L33 22" stroke="#2a84e0" strokeWidth="1.800" />
              <path d="M8 44H26" stroke="#111" strokeWidth="2" />
            </Ico>
          </Tool>
          <Tool>
            <Ico s={48}>
              <path d="M6 29L26 8a3 3 0 0 1 4 0L41 18a3 3 0 0 1 0 4L24 41a3 3 0 0 1-4 0L7 33a3 3 0 0 1-1-4ZM12 23L30 36M12 38L11 42H23L25 39" {...white} />
            </Ico>
          </Tool>
          <Tool>
            <Ico s={48}>
              <path d="M33 7L41 14a2 2 0 0 1 0 3L26 33L17 25L31 8a2 2 0 0 1 2-1ZM17 25L13 33L19 39L26 33M13 33L8 38L13 42L19 39" {...white} />
            </Ico>
          </Tool>
          <Tool>
            <Ico s={48}>
              <rect x="15" y="6" width="17" height="17" rx="1.500" {...white} />
              <circle cx="14" cy="31" r="9" {...white} />
              <path d="M39 24V42L26 33Z" {...white} />
            </Ico>
          </Tool>
          <Tool>
            <Ico s={48}>
              <circle cx="24" cy="21" r="15" {...white} strokeDasharray="4 2.500" />
              <path d="M12 31C14 37 20 39 24 44" {...white} strokeDasharray="4 2.500" />
            </Ico>
          </Tool>
          <Tool>
            <Ico s={48}>
              <path d="M20 9H28C38 9 44 15 44 24C44 28 43 32 40 34L33 40H20C10 40 4 33 4 24C4 15 10 9 20 9Z" {...white} />
              <path d="M33 40V35a2 2 0 0 1 2-2H41" {...white} />
              <path d="M24 17L26.200 22.500L32 23L27.500 26.800L29 32.500L24 29.500L19 32.500L20.500 26.800L16 23L21.800 22.500Z" fill="#eee" />
            </Ico>
          </Tool>
          <Tool>
            <Ico s={48}>
              <rect x="9" y="9" width="30" height="27" rx="2" {...white} />
              <path d="M10 35L21 27L27 30L33 24L38 27" {...white} />
              <path d="M17 13C16 18 20 22 25 20C21 20 18 17 19 13Z" {...white} />
            </Ico>
          </Tool>
          <Tool>
            <Ico s={48}>
              <path d="M11 18V10a2 2 0 0 1 2-2H37a2 2 0 0 1 2 2V18M39 27V36a2 2 0 0 1-2 2H13a2 2 0 0 1-2-2V27" {...white} />
              <circle cx="10" cy="22" r="2.500" {...white} />
              <circle cx="40" cy="22" r="2.500" {...white} />
              <path d="M18 14H32V18M18 14V18M25 14V31" fill="none" stroke="#eee" strokeWidth="2.400" />
            </Ico>
          </Tool>
          <Tool $w={45}>
            <Ico s={48} w={30}>
              <path d="M18 14L4 27C3 30 8 34 13 36M13 36" fill="none" stroke="#8a8a8c" strokeWidth="1.600" />
              <circle cx="12" cy="27" r="3" fill="none" stroke="#8a8a8c" strokeWidth="1.600" />
            </Ico>
          </Tool>
          <ToolRule $ml={0} $mr={11} />
          <Ico s={40} w={46}>
            <path d="M1 6H26" stroke="#eee" strokeWidth="2.500" />
            <rect x="0" y="13" width="26" height="5" rx="2" fill="#8a8a8c" />
            <rect x="0" y="23" width="26" height="9" rx="4" fill="#8a8a8c" />
            <circle cx="35" cy="7" r="6.500" fill="#000" stroke="#e8e8e8" strokeWidth="1.200" />
          </Ico>
        </ToolBar>
        <Paper>
          <Notes viewBox="966 192 767 888">
            {INK.map(([t, x, y, s, c], i) => (
              <Ink key={i} x={x} y={y} fontSize={c ? s : s * 1.250} $cjk={c}>{t}</Ink>
            ))}
            <g fill="none" stroke="#1d1d1d" strokeWidth="1.600" strokeLinecap="round" strokeLinejoin="round">
              <path d="M966 327C1000 325 1035 326 1065 323" strokeWidth="2" />
              <path d="M1190 288L1180 296C1177 315 1176 335 1176 350C1180 360 1190 358 1205 360" />
              <path d="M1427 291C1440 290 1450 292 1457 295C1459 325 1460 360 1459 385L1440 382" />
              <path d="M1096 425H1114M1092 446H1112" />
              <path d="M966 750C1000 715 1030 650 1050 597M1025 615L1050 596L1060 615" />
              <path d="M966 690L982 720" />
              <path d="M1131 604L1129 650M1143 604L1142 650M1118 630C1122 645 1126 655 1131 658C1137 655 1142 642 1145 627" />
              <path d="M1495 556L1492 612M1497 556C1510 560 1522 565 1522 572C1516 580 1505 585 1497 588" />
            </g>
          </Notes>
        </Paper>
      </RightPane>
      <Handle />
      <HomeBar />
    </Screen>
  );
}
